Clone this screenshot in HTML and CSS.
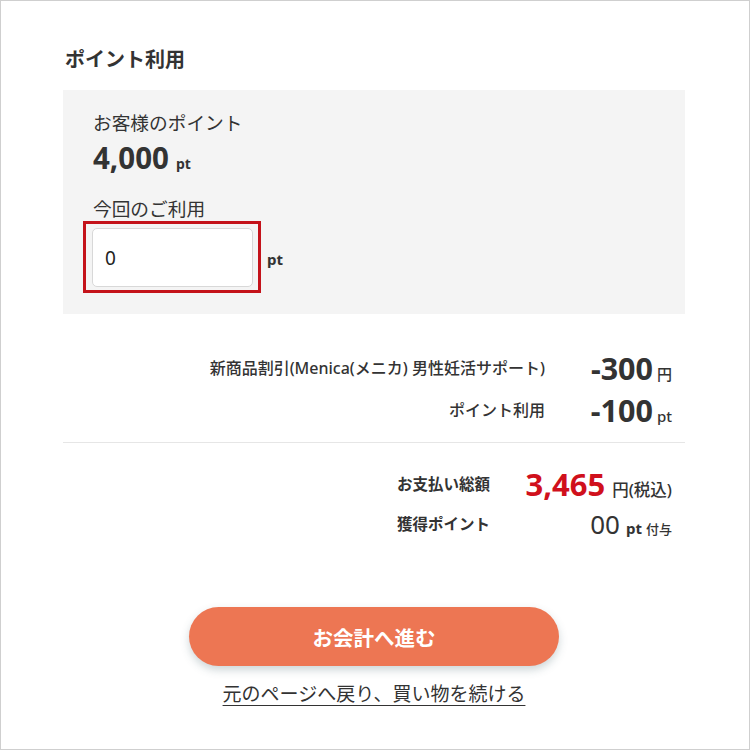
FILE: index.html
```html
<!DOCTYPE html>
<html lang="ja">
<head>
<meta charset="utf-8">
<link rel="stylesheet" href="styles.css">
</head>
<body>
<div class="page">
  <h2 class="title">ポイント利用</h2>
  <section class="points-box">
    <div class="label">お客様のポイント</div>
    <div class="amount">4,000<span class="unit">pt</span></div>
    <div class="label label-use">今回のご利用</div>
    <div class="input-row">
      <div class="input-wrap">
        <div class="input">0</div>
        <span class="highlight"></span>
      </div>
      <span class="input-unit">pt</span>
    </div>
  </section>

  <div class="summary">
    <div class="s-label">新商品割引(Menica(メニカ) 男性妊活サポート)</div>
    <div class="s-value"><span class="num">-300</span><span class="s-unit">円</span></div>
    <div class="s-label">ポイント利用</div>
    <div class="s-value"><span class="num">-100</span><span class="s-unit">pt</span></div>
  </div>

  <hr class="divider">

  <div class="totals">
    <div class="t-label">お支払い総額</div>
    <div class="t-value"><span class="total-num">3,465</span><span class="t-unit">円(税込)</span></div>
    <div class="t-label">獲得ポイント</div>
    <div class="t-value"><span class="earn-num">00</span><span class="earn-pt">pt</span><span class="earn-suffix">付与</span></div>
  </div>

  <div class="actions">
    <button class="checkout">お会計へ進む</button>
    <a class="back-link" href="#">元のページへ戻り、買い物を続ける</a>
  </div>
</div>
</body>
</html>
```

FILE: styles.css
```css
* { box-sizing: border-box; }
body {
  margin: 0;
  font-family: "Noto Sans", "Noto Sans CJK JP", sans-serif;
  color: #333;
  background: #fff;
}
.page {
  width: 750px;
  height: 750px;
  border: 1px solid #cfcfcf;
  padding: 45px 64px 0 62px;
  display: flex;
  flex-direction: column;
}
.title {
  margin: 0;
  font-size: 20px;
  line-height: 28px;
  font-weight: 700;
  padding-left: 2px;
}
.points-box {
  margin-top: 16px;
  background: #f4f4f4;
  padding: 20px 30px 27px;
  display: flex;
  flex-direction: column;
}
.label {
  font-size: 18.7px;
  line-height: 26px;
}
.amount {
  margin-top: 4px;
  font-size: 29.5px;
  line-height: 36px;
  font-weight: 700;
}
.amount .unit {
  font-size: 14px;
  margin-left: 7px;
}
.label-use { margin-top: 14px; }
.input-row {
  margin-top: 6px;
  display: flex;
  align-items: center;
}
.input-wrap { position: relative; }
.input {
  width: 161px;
  height: 59px;
  margin-left: -1px;
  background: #fff;
  border: 1px solid #d8d8d8;
  border-radius: 5px;
  padding-left: 12px;
  display: flex;
  align-items: center;
  font-size: 19px;
  color: #222;
}
.highlight {
  position: absolute;
  left: -10px;
  top: -7px;
  right: -8px;
  bottom: -6px;
  border: 3px solid #c4121a;
}
.input-unit {
  margin-left: 14px;
  font-size: 15px;
  font-weight: 700;
  padding-top: 2px;
}
.summary {
  margin-top: 33px;
  padding-right: 13px;
  display: grid;
  grid-template-columns: 1fr auto;
  grid-auto-rows: 42px;
  column-gap: 44px;
  align-items: center;
}
.s-label {
  text-align: right;
  font-size: 16px;
  font-weight: 500;
  line-height: 24px;
}
.s-value {
  display: flex;
  justify-content: flex-end;
  align-items: baseline;
  width: 83px;
  line-height: 1;
}
.num {
  font-size: 30.5px;
  font-weight: 700;
}
.s-unit {
  margin-left: 4px;
  font-size: 15px;
  font-weight: 500;
}
.divider {
  margin: 11px 0 0;
  border: 0;
  border-top: 1px solid #e6e6e6;
}
.totals {
  margin-top: 21px;
  align-self: flex-end;
  width: 288px;
  padding-right: 13px;
  display: grid;
  grid-template-columns: 1fr auto;
  grid-auto-rows: 40px;
  align-items: center;
}
.t-label {
  font-size: 15.5px;
  font-weight: 700;
  line-height: 24px;
}
.t-value {
  display: flex;
  justify-content: flex-end;
  align-items: baseline;
  line-height: 1;
}
.total-num {
  font-size: 31px;
  font-weight: 700;
  color: #d0101c;
}
.t-unit {
  margin-left: 7px;
  font-size: 16.5px;
  font-weight: 500;
}
.earn-num {
  font-size: 26px;
  font-weight: 400;
}
.earn-pt {
  margin-left: 6px;
  font-size: 15px;
  font-weight: 700;
}
.earn-suffix {
  margin-left: 4px;
  font-size: 13px;
  font-weight: 500;
}
.actions {
  margin-top: 63px;
  display: flex;
  flex-direction: column;
  align-items: center;
}
.checkout {
  width: 370px;
  height: 59px;
  border: 0;
  border-radius: 30px;
  background: #ed7653;
  color: #fff;
  font-family: inherit;
  font-size: 20.5px;
  font-weight: 700;
  box-shadow: 0 4px 8px rgba(60, 90, 100, 0.25);
}
.back-link {
  margin-top: 15px;
  font-size: 19px;
  line-height: 26px;
  color: #333;
  text-decoration: underline;
  text-underline-offset: 4px;
}
```
